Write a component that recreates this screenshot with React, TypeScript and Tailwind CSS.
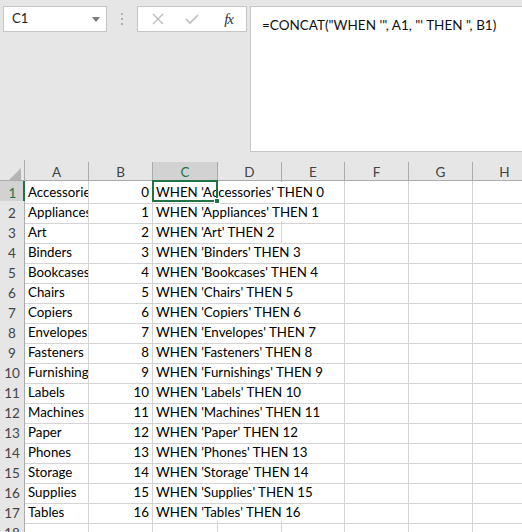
import React from "react";

const names = [
  "Accessories",
  "Appliances",
  "Art",
  "Binders",
  "Bookcases",
  "Chairs",
  "Copiers",
  "Envelopes",
  "Fasteners",
  "Furnishings",
  "Labels",
  "Machines",
  "Paper",
  "Phones",
  "Storage",
  "Supplies",
  "Tables",
];

const cols = ["A", "B", "C", "D", "E", "F", "G", "H"];

const gridCols = "grid grid-cols-[25px_64px_64px_65px_64px_63px_64px_64px_64px]";

const App = () => {
  return (
    <div className="w-[522px] h-[532px] overflow-hidden bg-[#e6e6e6] font-['Lato',sans-serif] text-[#000]">
      {/* Formula bar area */}
      <div className="flex items-start h-[160px] pt-[6px] pl-[3px]">
        <div className="w-[104px] h-[26px] bg-white border border-[#c6c6c6] flex items-center justify-between pl-[8px] pr-[6px]">
          <span className="text-[13px] text-[#222]">C1</span>
          <svg width="8" height="5" viewBox="0 0 8 5">
            <path d="M0 0 L8 0 L4 5 Z" fill="#7a7a7a" />
          </svg>
        </div>
        <div className="w-[30px] h-[26px] flex flex-col items-center justify-center gap-[3px]">
          <div className="w-[2px] h-[2px] bg-[#b0b0b0]" />
          <div className="w-[2px] h-[2px] bg-[#b0b0b0]" />
          <div className="w-[2px] h-[2px] bg-[#b0b0b0]" />
        </div>
        <div className="w-[110px] h-[26px] bg-white border border-[#c6c6c6] flex items-center pl-[14px] pr-[13px] justify-between">
          <svg width="12" height="12" viewBox="0 0 12 12">
            <path d="M1 1 L11 11 M11 1 L1 11" stroke="#bdbdbd" strokeWidth="1.4" />
          </svg>
          <svg width="14" height="12" viewBox="0 0 14 12" className="-ml-[4px]">
            <path d="M1 6 L5 10 L13 2" stroke="#bdbdbd" strokeWidth="1.6" fill="none" />
          </svg>
          <span className="font-['Liberation_Serif',serif] italic text-[15px] text-[#333] tracking-[-1px]">fx</span>
        </div>
        <div className="ml-[3px] flex-1 h-[146px] bg-white border-l border-t border-b border-[#c6c6c6] pl-[11px] pt-[5px]">
          <span className="text-[13.5px] text-[#111] whitespace-nowrap">
            =CONCAT("WHEN '", A1, "' THEN ", B1)
          </span>
        </div>
      </div>

      {/* Column headers */}
      <div className={`${gridCols} h-[21px] border-b border-[#ababab]`}>
        <div className="flex items-end justify-end pr-[3px] pb-[2px] border-r border-[#ababab]">
          <svg width="12" height="12" viewBox="0 0 12 12">
            <path d="M12 0 L12 12 L0 12 Z" fill="#b4b4b4" />
          </svg>
        </div>
        {cols.map((c) => (
          <div
            key={c}
            className={
              c === "C"
                ? "flex items-center justify-center text-[13.5px] text-[#217346] bg-[#d2d2d2] border-r border-[#ababab] mt-[2px] shadow-[inset_0_-2px_0_#217346]"
                : "flex items-center justify-center text-[13.5px] text-[#444] border-r border-[#ababab] mt-[2px]"
            }
          >
            {c}
          </div>
        ))}
      </div>

      {/* Rows */}
      {[...names, ""].map((name, i) => {
        const formula = name ? `WHEN '${name}' THEN ${i}` : "";
        const span = !name ? 1 : formula.length <= 18 ? 2 : 3;
        const rest = cols.slice(2 + span);
        const first = i === 0;
        return (
          <div key={i} className={`${gridCols} h-[20px] bg-white`}>
            <div
              className={
                first
                  ? "flex items-center justify-center pt-[2px] text-[13.5px] text-[#217346] bg-[#d2d2d2] border-b border-[#ababab] shadow-[inset_-2px_0_0_#217346]"
                  : "flex items-center justify-center pt-[2px] text-[13.5px] text-[#444] bg-[#e6e6e6] border-b border-r border-[#ababab]"
              }
            >
              {i + 1}
            </div>
            <div className="flex items-center pl-[3px] pt-[2px] text-[13.3px] border-r border-b border-[#d4d4d4] overflow-hidden whitespace-nowrap">
              {name}
            </div>
            <div className="flex items-center justify-end pr-[3px] pt-[2px] text-[13.3px] border-r border-b border-[#d4d4d4]">
              {name ? i : ""}
            </div>
            <div
              className={
                span === 3
                  ? "col-span-3 relative flex items-center pl-[3px] pt-[2px] text-[13.3px] border-r border-b border-[#d4d4d4] whitespace-nowrap"
                  : span === 2
                  ? "col-span-2 relative flex items-center pl-[3px] pt-[2px] text-[13.3px] border-r border-b border-[#d4d4d4] whitespace-nowrap"
                  : "relative flex items-center pl-[3px] pt-[2px] text-[13.3px] border-r border-b border-[#d4d4d4] whitespace-nowrap"
              }
            >
              {formula}
              {first && (
                <div className="absolute left-[-1px] top-[-1px] w-[66px] h-[22px] border-2 border-[#217346]">
                  <div className="absolute right-[-4px] bottom-[-4px] w-[6px] h-[6px] bg-[#217346] border border-white" />
                </div>
              )}
            </div>
            {rest.map((c) => (
              <div key={c} className="border-r border-b border-[#d4d4d4]" />
            ))}
          </div>
        );
      })}
    </div>
  );
};

export default App;
